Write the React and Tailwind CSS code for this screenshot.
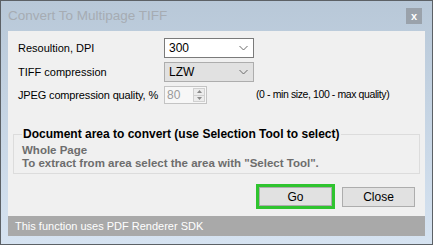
import { useState } from "react";

function Chevron() {
    return (
        <svg width="9" height="6" viewBox="0 0 9 6" className="shrink-0">
            <polyline points="0.5,1 4.5,5 8.5,1" fill="none" stroke="#6b6b6b" strokeWidth="1" />
        </svg>
    );
}

function Combo({ value, disabled }) {
    return (
        <div
            className={
                disabled
                    ? "flex h-[20px] w-[90px] items-center justify-between border border-[#adadad] bg-[#e1e1e1] pl-[4px] pr-[5px]"
                    : "flex h-[20px] w-[90px] items-center justify-between border border-[#7a7a7a] bg-white pl-[4px] pr-[5px]"
            }
        >
            <span className="text-[12px] leading-none text-black">{value}</span>
            <Chevron />
        </div>
    );
}

function Spinner({ value }) {
    return (
        <div className="flex h-[18px] w-[43px] shrink-0 items-stretch border border-[#c4c4c4] bg-[#f7f7f7]">
            <span className="flex-1 pl-[2px] text-[12px] leading-[16px] text-[#9a9a9a]">{value}</span>
            <div className="my-[1px] mr-[1px] flex w-[12px] flex-col border border-[#d0d0d0] bg-[#ececec]">
                <div className="flex flex-1 items-center justify-center border-b border-[#d0d0d0]">
                    <svg width="5" height="3" viewBox="0 0 5 3">
                        <polygon points="0,3 2.5,0 5,3" fill="#8a8a8a" />
                    </svg>
                </div>
                <div className="flex flex-1 items-center justify-center">
                    <svg width="5" height="3" viewBox="0 0 5 3">
                        <polygon points="0,0 2.5,3 5,0" fill="#8a8a8a" />
                    </svg>
                </div>
            </div>
        </div>
    );
}

export default function App() {
    const [dpi] = useState("300");

    return (
        <div
            className="flex h-[245px] w-[433px] flex-col border border-[#5c6166] bg-gradient-to-b from-[#b8c8d8] to-[#d6e3f1]"
            style={{ fontFamily: '"Liberation Sans", Arial, sans-serif' }}
        >
            {/* title bar */}
            <div className="flex h-[30px] shrink-0 items-center justify-between pl-[7px] pr-[10px]">
                <span className="text-[13.5px] text-[#a6acb3]">Convert To Multipage TIFF</span>
                <div className="flex h-[16px] w-[16px] items-center justify-center bg-[#9aa2ab] text-[11px] font-bold leading-none text-white">
                    x
                </div>
            </div>

            {/* body */}
            <div className="mx-[7px] flex h-[185px] shrink-0 flex-col bg-[#f0f0f0] pt-[7px]">
                <div className="flex flex-col gap-[4px] pl-[10px]">
                    <div className="flex h-[20px] items-center">
                        <span className="w-[146px] shrink-0 whitespace-nowrap text-[11px] text-black">Resoultion, DPI</span>
                        <Combo value={dpi} />
                    </div>
                    <div className="flex h-[20px] items-center">
                        <span className="w-[146px] shrink-0 whitespace-nowrap text-[11px] text-black">TIFF compression</span>
                        <Combo value="LZW" disabled />
                    </div>
                    <div className="flex h-[18px] items-center">
                        <span className="w-[146px] shrink-0 whitespace-nowrap text-[11px] tracking-[-0.15px] text-black">JPEG compression quality, %</span>
                        <Spinner value="80" />
                        <span className="ml-[49px] whitespace-nowrap text-[10.5px] tracking-[-0.4px] text-black">(0 - min size, 100 - max quality)</span>
                    </div>
                </div>

                <fieldset className="mx-[5px] mt-[23px] h-[47px] border border-[#dcdcdc] px-[8px]">
                    <legend className="px-[1px] text-[12px] font-bold leading-[14px] text-black">
                        Document area to convert (use Selection Tool to select)
                    </legend>
                    <div className="pt-[3px] text-[11.5px] font-bold leading-[13px] text-[#6d6d6d]">
                        <div>Whole Page</div>
                        <div>To extract from area select the area with "Select Tool".</div>
                    </div>
                </fieldset>

                <div className="mt-[10px] flex items-center justify-end gap-[7px] pr-[10px]">
                    <div className="border-[3px] border-[#2fc42f]">
                        <button className="flex h-[19px] w-[73px] items-center justify-center border border-[#adadad] bg-[#e1e1e1] text-[12px] text-black">
                            Go
                        </button>
                    </div>
                    <button className="flex h-[20px] w-[73px] items-center justify-center border border-[#adadad] bg-[#e1e1e1] text-[12px] text-black">
                        Close
                    </button>
                </div>
            </div>

            {/* footer */}
            <div className="mx-[7px] flex h-[20px] shrink-0 items-center bg-[#a9a9a9] pl-[7px]">
                <span className="text-[11px] text-white">This function uses PDF Renderer SDK</span>
            </div>
        </div>
    );
}
